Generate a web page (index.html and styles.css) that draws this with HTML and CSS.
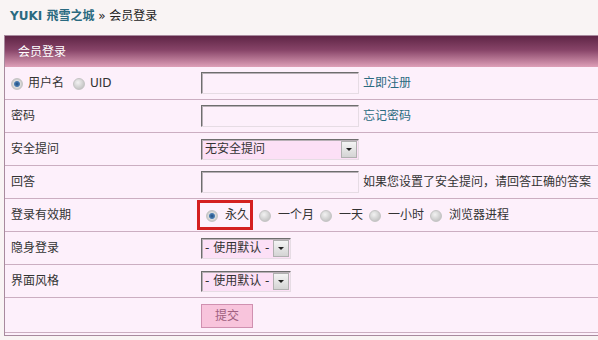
FILE: index.html
```html
<!DOCTYPE html>
<html lang="zh-CN">
<head>
    <meta charset="UTF-8">
    <title>会员登录 - YUKI 飛雪之城</title>
    <link rel="stylesheet" href="styles.css">
</head>
<body>
    <div class="nav"><a href="#" class="site">YUKI 飛雪之城</a> &raquo; 会员登录</div>

    <div class="box">
        <div class="box-head">会员登录</div>

        <div class="row">
            <div class="label">
                <label class="opt"><input type="radio" name="loginfield" checked>用户名</label>
                <label class="opt"><input type="radio" name="loginfield">UID</label>
            </div>
            <div class="field">
                <input type="text" class="txt">
                <a href="#" class="link">立即注册</a>
            </div>
        </div>

        <div class="row">
            <div class="label">密码</div>
            <div class="field">
                <input type="password" class="txt">
                <a href="#" class="link">忘记密码</a>
            </div>
        </div>

        <div class="row">
            <div class="label">安全提问</div>
            <div class="field">
                <span class="select">
                    <select><option>无安全提问</option></select>
                    <span class="arrow"></span>
                </span>
            </div>
        </div>

        <div class="row">
            <div class="label">回答</div>
            <div class="field">
                <input type="text" class="txt">
                <span class="tip">如果您设置了安全提问，请回答正确的答案</span>
            </div>
        </div>

        <div class="row">
            <div class="label">登录有效期</div>
            <div class="field periods">
                <span class="mark"><label class="opt"><input type="radio" name="cookietime" checked>永久</label></span>
                <label class="opt"><input type="radio" name="cookietime">一个月</label>
                <label class="opt"><input type="radio" name="cookietime">一天</label>
                <label class="opt"><input type="radio" name="cookietime">一小时</label>
                <label class="opt"><input type="radio" name="cookietime">浏览器进程</label>
            </div>
        </div>

        <div class="row">
            <div class="label">隐身登录</div>
            <div class="field">
                <span class="select small">
                    <select><option>- 使用默认 -</option></select>
                    <span class="arrow"></span>
                </span>
            </div>
        </div>

        <div class="row">
            <div class="label">界面风格</div>
            <div class="field">
                <span class="select small">
                    <select><option>- 使用默认 -</option></select>
                    <span class="arrow"></span>
                </span>
            </div>
        </div>

        <div class="row last">
            <div class="label"></div>
            <div class="field">
                <button class="submit">提交</button>
            </div>
        </div>
    </div>
</body>
</html>
```

FILE: styles.css
```css
/* login page, pink board theme */
body {
    margin: 0;
    background-color: #f9f4f4;
    font: 12px/16px "DejaVu Sans", "Noto Sans CJK SC", sans-serif;
    color: #333;
    overflow: hidden;
}
a {
    text-decoration: none;
}

.nav {
    height: 16px;
    padding: 8px 10px;
    color: #222;
}
.nav .site {
    color: #2a6a80;
    font-weight: bold;
}

.box {
    width: 640px;
    margin: 3px 0 0 4px;
    border: 1px solid #a88a9e;
    background-color: #fdf0fb;
    padding-bottom: 2px;
}
.box-head {
    height: 31px;
    line-height: 33px;
    padding-left: 13px;
    color: #fff;
    background: linear-gradient(#5f2546, #874468 45%, #dea0b8);
}

.row {
    display: flex;
    align-items: center;
    height: 32px;
    border-bottom: 1px solid #cbaec1;
}
.row.last {
    height: 34px;
}
.label {
    width: 190px;
    padding-left: 6px;
    display: flex;
    align-items: center;
}
.field {
    display: flex;
    align-items: center;
    flex: 1;
}

.opt {
    display: inline-flex;
    align-items: center;
    margin-right: 9px;
}
.opt input {
    appearance: none;
    width: 12px;
    height: 12px;
    margin: 1px 5px 0 0;
    border: 1px solid #c4c4c4;
    border-radius: 50%;
    background: radial-gradient(circle at 40% 35%, #f2f2f2, #c8c8c8 70%, #b4b4b4);
}
.opt input:checked {
    background: radial-gradient(circle at 50% 50%, #1f4d7e 0, #4a7cb2 2.5px, #dcdcdc 3.5px, #bcbcbc 6px);
}

.txt {
    box-sizing: border-box;
    width: 158px;
    height: 22px;
    margin: 0;
    border: 1px solid;
    border-color: #6e6e6e #e6dce4 #e6dce4 #6e6e6e;
    box-shadow: inset 1px 1px 0 #b8b0b6;
    background-color: #fdf0fb;
}
.link {
    margin-left: 4px;
    color: #2a6a80;
}
.tip {
    margin-left: 4px;
    white-space: nowrap;
}

.select {
    box-sizing: border-box;
    display: inline-flex;
    align-items: center;
    width: 158px;
    height: 21px;
    border: 1px solid;
    border-color: #6e6e6e #e6dce4 #e6dce4 #6e6e6e;
    box-shadow: inset 1px 1px 0 #b8b0b6;
    background-color: #fce0f6;
}
.select.small {
    width: 90px;
}
.select select {
    appearance: none;
    flex: 1;
    min-width: 0;
    border: none;
    background: transparent;
    padding: 0 0 0 3px;
    font: inherit;
    color: #333;
}
.arrow {
    position: relative;
    width: 14px;
    height: 15px;
    margin-right: 1px;
    border: 1px solid #b0b0b0;
    background: linear-gradient(#f4f4f4, #d4d4d4);
}
.arrow::after {
    content: "";
    position: absolute;
    left: 4px;
    top: 6px;
    border: 3px solid transparent;
    border-top: 3px solid #222;
    border-bottom: none;
}

.periods .opt input {
    margin-right: 7px;
}
.periods .opt {
    margin-right: 6px;
}
.mark {
    display: inline-flex;
    align-items: center;
    height: 24px;
    margin: 0 6px 0 -4px;
    padding: 0 1px 0 6px;
    border: 3px solid #d41f1f;
}
.mark .opt {
    margin-right: 0;
}

.submit {
    width: 52px;
    height: 24px;
    margin-top: 2px;
    padding: 0;
    border: 1px solid #d090b0;
    background-color: #f8c4dc;
    color: #a06080;
    font: inherit;
}
```
